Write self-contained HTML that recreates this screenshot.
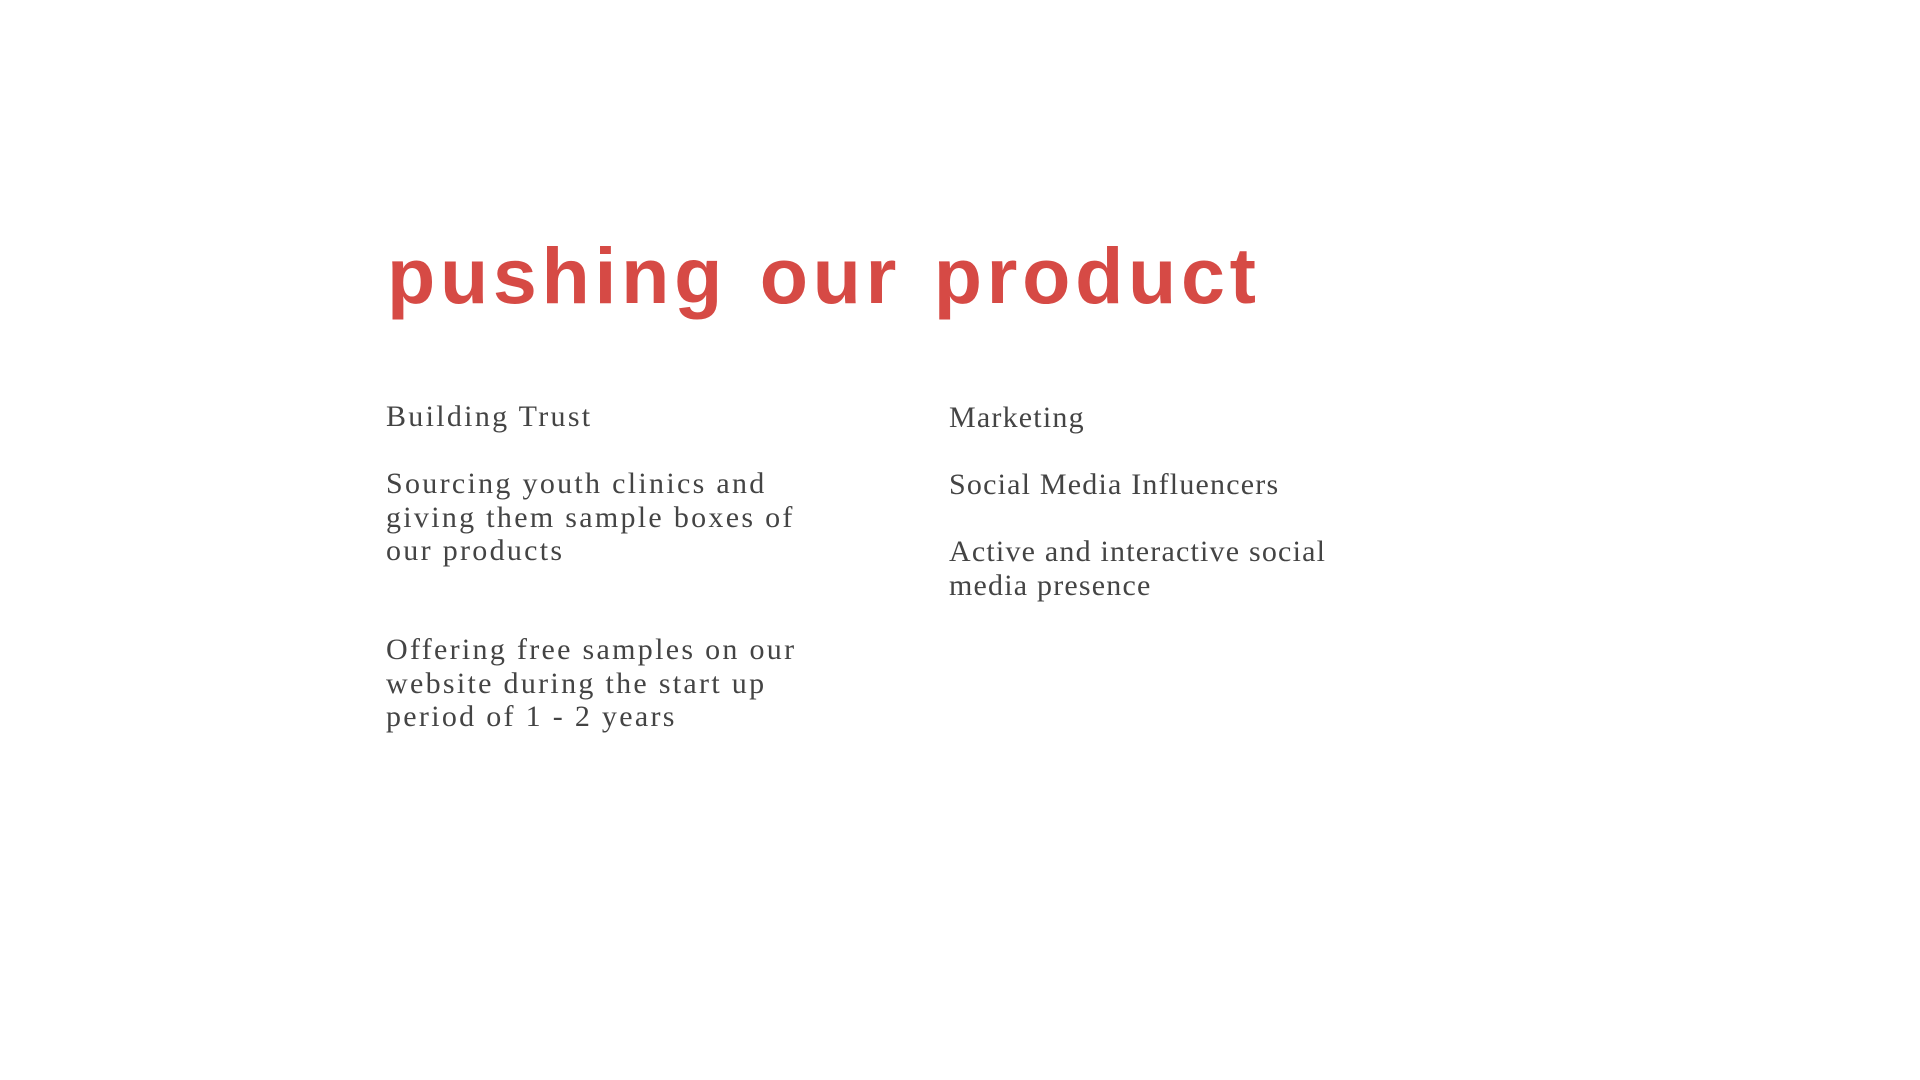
<!DOCTYPE html>
<html><head><meta charset="utf-8"><style>
html,body{margin:0;padding:0;width:1920px;height:1080px;background:#fff;overflow:hidden}
.t{position:absolute;left:387px;top:221px;font:bold 79px/110px "Liberation Sans",sans-serif;color:#d64a45;letter-spacing:4.7px;word-spacing:6px;white-space:nowrap}
.b{position:absolute;font:30px/33.5px "Liberation Serif",serif;color:#444;white-space:nowrap;letter-spacing:2.3px}
.r{letter-spacing:1.2px}
</style></head><body>
<div class="t">pushing our product</div>
<div class="b" style="left:386px;top:400px">Building Trust</div>
<div class="b" style="left:386px;top:467px">Sourcing youth clinics and<br>giving them sample boxes of<br>our products</div>
<div class="b" style="left:386px;top:633px">Offering free samples on our<br>website during the start up<br>period of 1 - 2 years</div>
<div class="b r" style="left:949px;top:401px">Marketing</div>
<div class="b r" style="left:949px;top:468px">Social Media Influencers</div>
<div class="b r" style="left:949px;top:535px">Active and interactive social<br>media presence</div>
</body></html>
